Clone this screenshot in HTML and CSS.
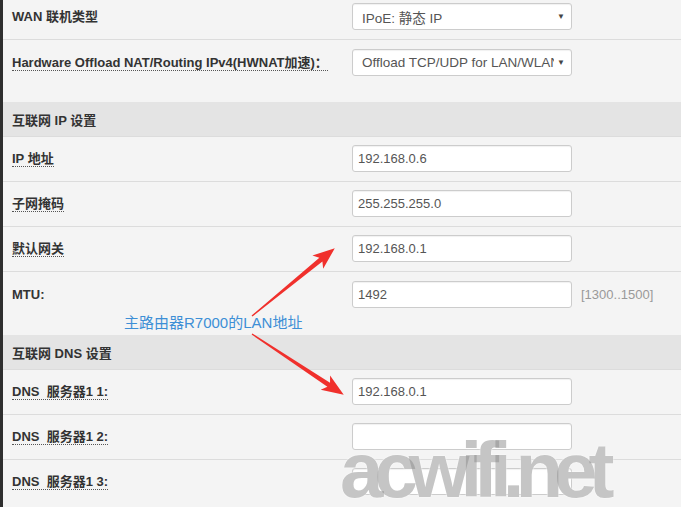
FILE: index.html
```html
<!DOCTYPE html>
<html lang="zh-CN">
<head>
<meta charset="utf-8">
<title>WAN</title>
<link rel="stylesheet" href="styles.css">
</head>
<body>
<div class="page">
  <div class="row row-first">
    <div class="label"><span class="plain">WAN 联机类型</span></div>
    <div class="field"><div class="select"><span class="sel-text">IPoE: 静态 IP</span><span class="caret">▼</span></div></div>
  </div>
  <div class="row row-tall">
    <div class="label"><span class="dotted">Hardware Offload NAT/Routing IPv4(HWNAT加速)：</span></div>
    <div class="field"><div class="select"><span class="sel-text">Offload TCP/UDP for LAN/WLAN</span><span class="caret">▼</span></div></div>
  </div>
  <div class="section">互联网 IP 设置</div>
  <div class="row">
    <div class="label"><span class="dotted">IP 地址</span></div>
    <div class="field"><div class="input">192.168.0.6</div></div>
  </div>
  <div class="row">
    <div class="label"><span class="dotted">子网掩码</span></div>
    <div class="field"><div class="input">255.255.255.0</div></div>
  </div>
  <div class="row">
    <div class="label"><span class="dotted">默认网关</span></div>
    <div class="field"><div class="input">192.168.0.1</div></div>
  </div>
  <div class="row row-mtu">
    <div class="label"><span class="plain">MTU:</span></div>
    <div class="field"><div class="input">1492</div><span class="hint">[1300..1500]</span></div>
  </div>
  <div class="section">互联网 DNS 设置</div>
  <div class="row">
    <div class="label"><span class="dotted">DNS&nbsp; 服务器1 1:</span></div>
    <div class="field"><div class="input">192.168.0.1</div></div>
  </div>
  <div class="row">
    <div class="label"><span class="dotted">DNS&nbsp; 服务器1 2:</span></div>
    <div class="field"><div class="input"></div></div>
  </div>
  <div class="row row-last">
    <div class="label"><span class="dotted">DNS&nbsp; 服务器1 3:</span></div>
    <div class="field"><div class="input"></div></div>
  </div>

  <svg class="arrows" width="681" height="507" viewBox="0 0 681 507" aria-hidden="true">
    <g transform="translate(252 316) rotate(-39.3)">
      <polygon class="arrow" points="0,-0.7 89,-2.4 85,-8.5 107,0 85,8.5 89,2.4 0,0.7"/>
    </g>
    <g transform="translate(252 334) rotate(33.5)">
      <polygon class="arrow" points="0,-0.7 92,-2.4 88,-8.5 110,0 88,8.5 92,2.4 0,0.7"/>
    </g>
  </svg>
  <div class="note">主路由器R7000的LAN地址</div>
  <div class="watermark">acwifi.net</div>
</div>
</body>
</html>
```

FILE: styles.css
```css
html, body {
  margin: 0;
  padding: 0;
  background: #f4f4f4;
}
.page {
  position: relative;
  width: 678px;
  height: 507px;
  overflow: hidden;
  border-left: 3px solid #2e2e2e;
  background: #f4f4f4;
  font-family: "Liberation Sans", "Noto Sans CJK SC", sans-serif;
  font-size: 13px;
  color: #333;
}
.row {
  display: flex;
  align-items: flex-start;
  padding: 8px 0 9px;
  border-bottom: 1px solid #dcdcdc;
}
.row-first { padding-top: 3px; }
.row-tall { padding: 9px 0 26px; border-bottom: none; }
.row-mtu { padding: 9px 0 27px; border-bottom: none; }
.row-last { border-bottom: none; }
.label {
  width: 340px;
  padding-left: 9px;
  box-sizing: border-box;
  height: 27px;
  display: flex;
  align-items: center;
  font-weight: bold;
  color: #333;
}
.label .dotted {
  border-bottom: 1px dotted #555;
  line-height: 15px;
  margin-top: 1px;
}
.label .plain { line-height: 15px; }
.field {
  display: flex;
  align-items: center;
  gap: 9px;
  padding-left: 9px;
}
.input, .select {
  width: 220px;
  height: 27px;
  box-sizing: border-box;
  background: #fff;
  border: 1px solid #cccccc;
  border-radius: 3px;
  box-shadow: inset 0 1px 1px rgba(0,0,0,0.06);
  color: #555;
  display: flex;
  align-items: center;
  padding-left: 5px;
  font-size: 13px;
}
.select {
  padding-left: 9px;
  padding-right: 6px;
  gap: 3px;
}
.sel-text {
  flex: 1;
  overflow: hidden;
  white-space: nowrap;
  font-size: 13.5px;
}
.caret {
  font-size: 8px;
  color: #444;
}
.hint {
  color: #999;
  font-size: 13px;
}
.section {
  height: 35px;
  box-sizing: border-box;
  background: #e4e4e4;
  border-bottom: 1px solid #dcdcdc;
  display: flex;
  align-items: center;
  padding-left: 9px;
  font-weight: bold;
  color: #333;
}
.arrows {
  position: absolute;
  left: -3px;
  top: 0;
  pointer-events: none;
}
.arrow { fill: #f0302c; }
.note {
  position: absolute;
  left: 121px;
  top: 314px;
  font-size: 15px;
  line-height: 18px;
  color: #3d8fd6;
  white-space: nowrap;
}
.watermark {
  position: absolute;
  left: 337px;
  top: 430px;
  font-size: 78px;
  line-height: 80px;
  font-weight: bold;
  letter-spacing: -9px;
  font-family: "Liberation Sans", sans-serif;
  color: rgba(140,140,140,0.5);
  text-shadow: 0 0 2px rgba(255,255,255,0.9), 0 0 1px rgba(255,255,255,0.9);
  pointer-events: none;
  white-space: nowrap;
}
```
